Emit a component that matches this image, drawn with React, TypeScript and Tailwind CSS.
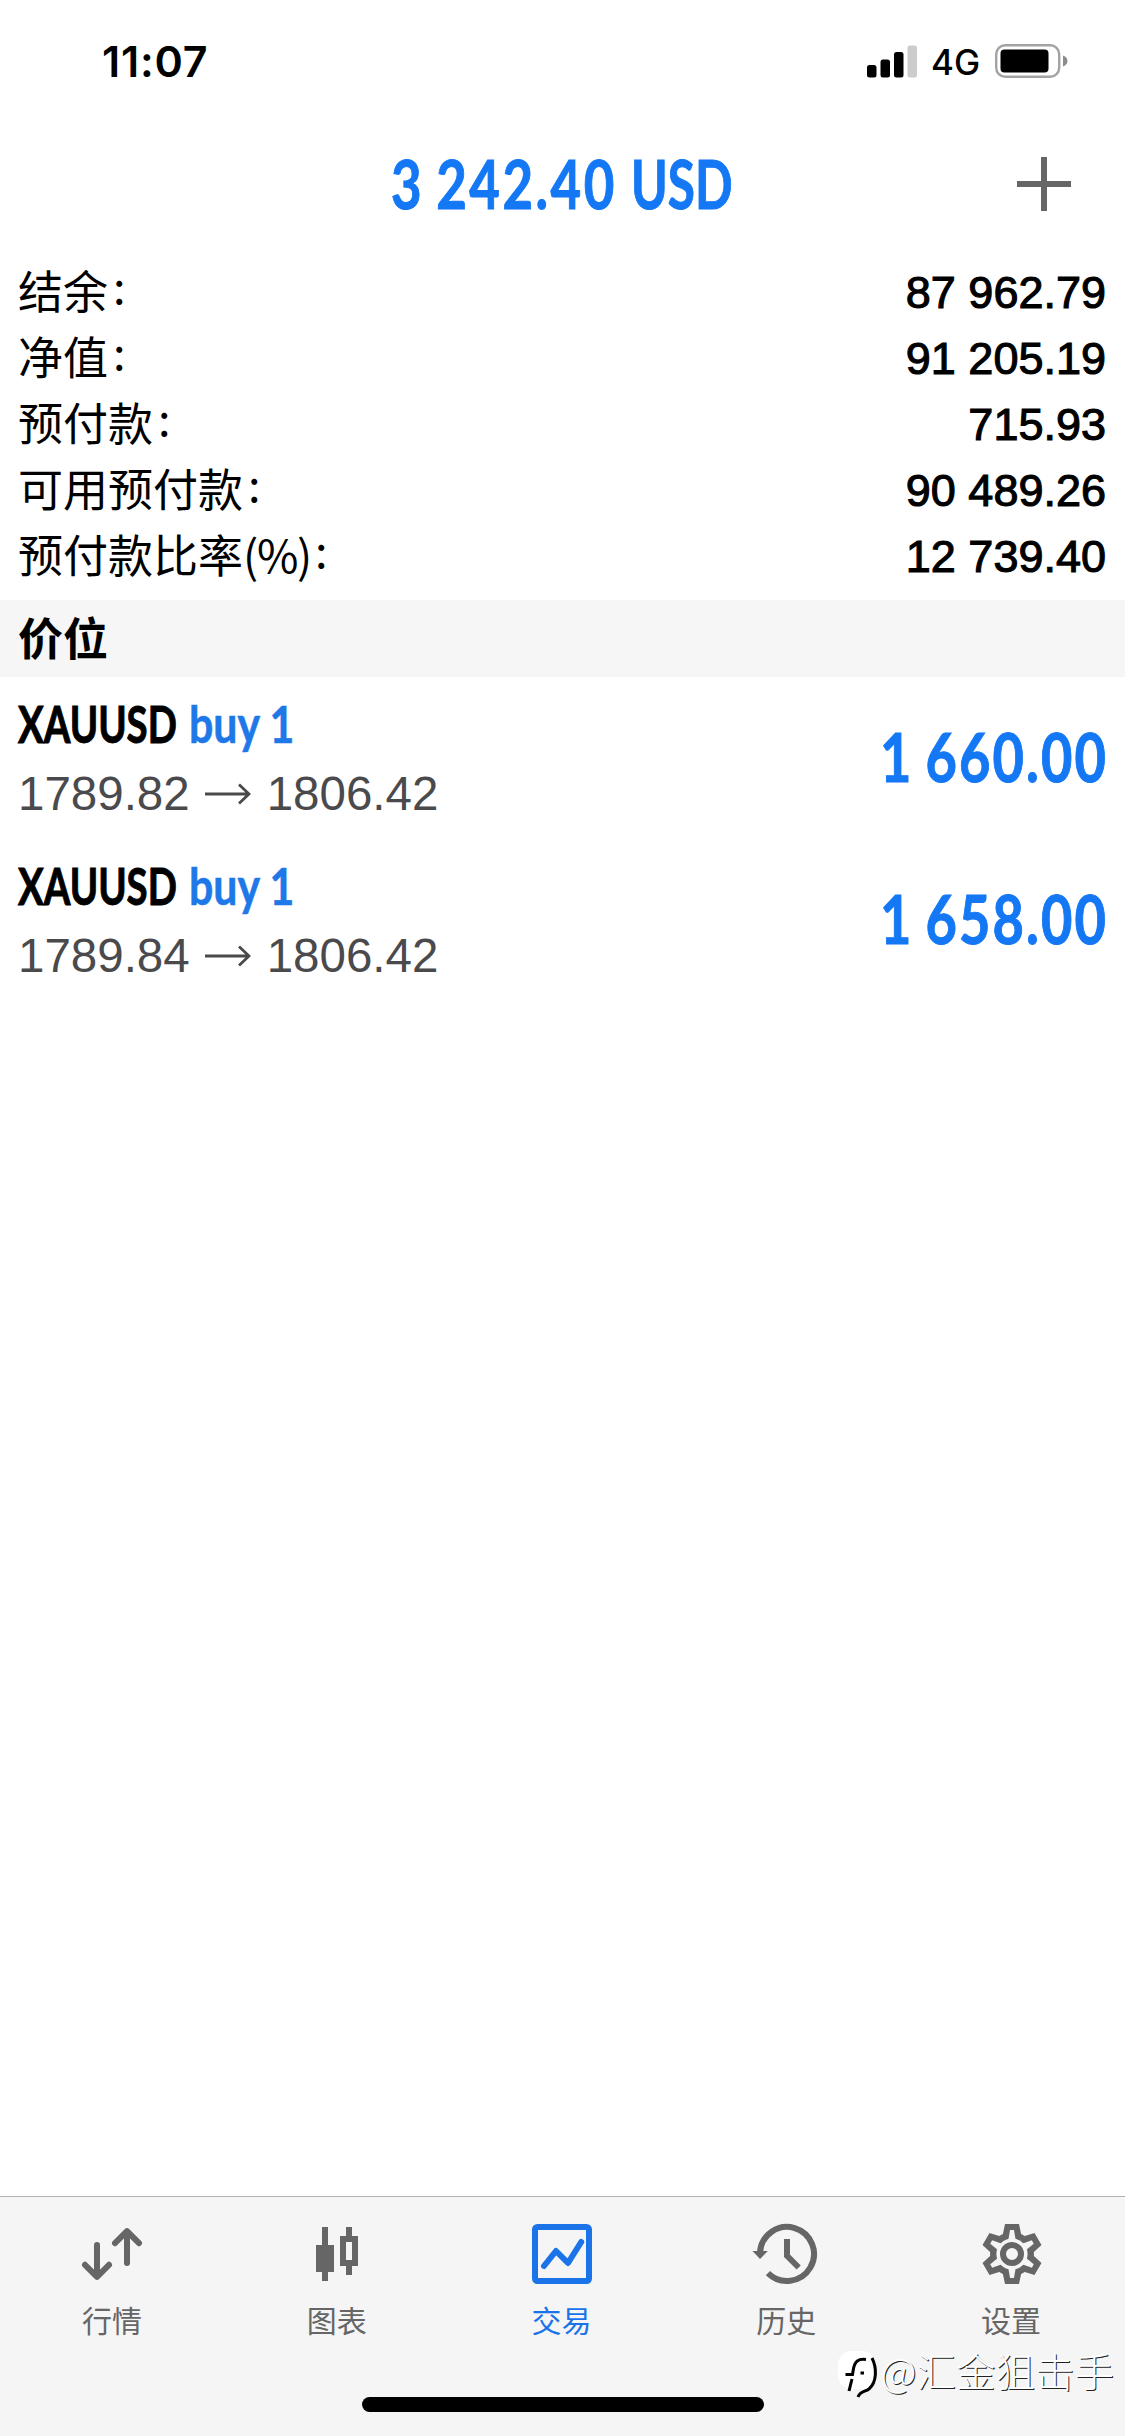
import React from 'react';

const accountRows = [
  { label: '结余', value: '87 962.79' },
  { label: '净值', value: '91 205.19' },
  { label: '预付款', value: '715.93' },
  { label: '可用预付款', value: '90 489.26' },
  { label: '预付款比率', unit: '(%)', value: '12 739.40' },
];

const positions = [
  { id: 1, symbol: 'XAUUSD', side: 'buy 1', open: '1789.82', current: '1806.42', profit: '1 660.00' },
  { id: 2, symbol: 'XAUUSD', side: 'buy 1', open: '1789.84', current: '1806.42', profit: '1 658.00' },
];

const QuotesIcon = () => (
  <g fill="none" stroke="currentColor" strokeWidth="2" strokeLinecap="round" strokeLinejoin="round">
    <path d="M7 9v10.6M3 15.6l4 4 4-4" />
    <path d="M17 15V4.4M13 8.4l4-4 4 4" />
  </g>
);

const ChartIcon = () => (
  <g fill="currentColor">
    <path d="M7 3h2v6h2v9H9v3H7v-3H5V9h2z" />
    <path fillRule="evenodd" d="M15 3h2v3h2v10h-2v3h-2v-3h-2V6h2zM15 8v6h2V8z" />
  </g>
);

const TradeIcon = () => (
  <g fill="none" stroke="currentColor" strokeWidth="2">
    <rect x="3" y="3" width="18" height="18" rx="0.8" />
    <path strokeLinecap="round" strokeLinejoin="round" d="M6 16l4-5 4 4 4.4-7" />
  </g>
);

const HistoryIcon = () => (
  <g fill="none" stroke="currentColor" strokeWidth="2">
    <path d="M3 11.6A9 9 0 1 1 5.64 18.36" />
    <path d="M12 7v5.6l3.9 3.9" />
    <path d="M0.5 11h5.1L3 13.7z" fill="currentColor" stroke="none" />
  </g>
);

const SettingsIcon = () => (
  <g>
    <path
      fill="currentColor"
      d="M9.67 2h4.66l.71 3.33 1.22.7 3.24-1.05 2.33 4.04-2.53 2.28v1.4l2.53 2.28-2.33 4.04-3.24-1.05-1.22.7-.71 3.33H9.67l-.71-3.33-1.22-.7-3.24 1.05-2.33-4.04L4.7 12.7v-1.4L2.17 9.02 4.5 4.98l3.24 1.05 1.22-.7z"
    />
    <g fill="#f5f5f5">
      <circle cx="12" cy="12" r="5.2" />
      {[0, 60, 120, 180, 240, 300].map((angle) => (
        <path key={angle} d="M11.35 4h1.3l.6 3.4h-2.5z" transform={`rotate(${angle} 12 12)`} />
      ))}
    </g>
    <circle cx="12" cy="12" r="3" fill="none" stroke="currentColor" strokeWidth="2" />
  </g>
);

const tabs = [
  { label: '行情', icon: <QuotesIcon />, active: false },
  { label: '图表', icon: <ChartIcon />, active: false },
  { label: '交易', icon: <TradeIcon />, active: true },
  { label: '历史', icon: <HistoryIcon />, active: false },
  { label: '设置', icon: <SettingsIcon />, active: false },
];

const StatusBar = () => (
  <div className="flex h-[122px] items-center justify-between pr-[57px] pl-[102px]">
    <span className="font-['Inter'] text-[43px] leading-none font-semibold tracking-[0.8px]">11:07</span>
    <div className="flex items-center">
      <svg width="51" height="34" viewBox="0 0 51 34">
        <rect x="0" y="21" width="9.5" height="12.5" rx="2.5" />
        <rect x="13.5" y="15.5" width="9.5" height="18" rx="2.5" />
        <rect x="27" y="8" width="9.5" height="25.5" rx="2.5" />
        <rect x="40.5" y="1.5" width="9.5" height="32" rx="2.5" fill="#ccc" />
      </svg>
      <span className="ml-[13px] w-[64px] pt-[3px] font-['Inter'] text-[35px] leading-none font-medium">4G</span>
      <svg width="73" height="34" viewBox="0 0 73 34">
        <rect x="1.2" y="1.2" width="63" height="31.6" rx="9" fill="none" stroke="#a3a3a3" strokeWidth="2.4" />
        <rect x="5.5" y="5.5" width="48" height="23" rx="4" />
        <path d="M68 11.5c6 2 6 9 0 11z" fill="#8c8c8c" />
      </svg>
    </div>
  </div>
);

const Header = () => (
  <div className="grid h-[124px] grid-cols-[1fr_auto_1fr] items-center">
    <span />
    <h1 className="flex w-[343px] font-['Lato'] text-[66px] leading-none font-bold whitespace-nowrap text-[#1478f5] [-webkit-text-stroke:1px_#1478f5]">
      <span className="w-[240px]">
        <span className="inline-block origin-left scale-x-[0.8] tracking-[3.1px] [word-spacing:-4px]">3 242.40</span>
      </span>
      <span className="w-[103px]">
        <span className="inline-block origin-left scale-x-[0.75]">USD</span>
      </span>
    </h1>
    <svg className="mr-[54px] justify-self-end" width="54" height="54" viewBox="0 0 54 54" fill="#666">
      <path d="M0 24h54v6H0z" />
      <path d="M24 0h6v54h-6z" />
    </svg>
  </div>
);

const AccountSummary = () => (
  <dl className="mt-[13px] h-[341px] pr-[19px] pl-[18px]">
    {accountRows.map((row) => (
      <div key={row.label} className="flex h-[66px] items-center justify-between text-[45px] leading-none">
        <dt className="flex pb-[6px] font-['Noto_Sans_CJK_SC',sans-serif]">
          {row.label}
          {row.unit && <span className="-mr-[1px] tracking-[-1.3px]">{row.unit}</span>}
          <span className="ml-[5px] -mt-[5px]">:</span>
        </dt>
        <dd className="font-['Liberation_Sans'] [-webkit-text-stroke:1.1px_#000]">{row.value}</dd>
      </div>
    ))}
  </dl>
);

const PositionRow = ({ item }: { item: (typeof positions)[number] }) => (
  <li className="flex h-[162px] items-center justify-between pl-[18px]">
    <div>
      <div className="flex h-[67px] items-center font-['Lato'] text-[51px] leading-none font-bold whitespace-nowrap">
        <span className="w-[171px]">
          <span className="inline-block origin-left scale-x-[0.752] [-webkit-text-stroke:1px_#000]">{item.symbol}</span>
        </span>
        <span className="inline-block origin-left scale-x-[0.84] text-[#1f78e8] [-webkit-text-stroke:0.6px_#1f78e8]">
          {item.side}
        </span>
      </div>
      <div className="flex h-[69px] items-center pt-[4px] font-['Liberation_Sans'] text-[47.5px] leading-none text-[#4a4a4c]">
        <span>{item.open}</span>
        <svg className="mr-[16px] ml-[15px]" width="46" height="22" viewBox="0 0 46 22" fill="none" stroke="currentColor" strokeWidth="2.8">
          <path d="M0 11h44M34 1.5L44 11 34 20.5" />
        </svg>
        <span>{item.current}</span>
      </div>
    </div>
    <span className="w-[245px] pb-[3px] font-['Lato'] text-[66px] leading-none font-bold whitespace-nowrap text-[#1478f5] [-webkit-text-stroke:1px_#1478f5]">
      <span className="inline-block origin-left scale-x-[0.82] tracking-[2.6px] [word-spacing:-4px]">{item.profit}</span>
    </span>
  </li>
);

const TabBar = () => (
  <nav className="flex h-[240px] flex-col items-center border-t border-[#b2b2b2] bg-[#f5f5f5]">
    <div className="grid w-full grid-cols-5 pt-[21px] pr-px">
      {tabs.map((tab) => (
        <div
          key={tab.label}
          className={`flex flex-col items-center ${tab.active ? 'text-[#1a73e8]' : 'text-[#666]'}`}
        >
          <svg width="72" height="72" viewBox="0 0 24 24">
            {tab.icon}
          </svg>
          <span className="mt-[12px] mr-[1px] font-['Noto_Sans_CJK_SC',sans-serif] text-[30px] leading-[34px]">
            {tab.label}
          </span>
        </div>
      ))}
    </div>
    <div className="mt-[61px] h-[15px] w-[402px] rounded-full bg-black" />
  </nav>
);

const Watermark = () => (
  <div className="absolute top-[2350px] right-[11px] flex items-start text-white">
    <svg width="43" height="50" viewBox="0 0 43 50">
      <rect x="0" y="1" width="38" height="38" rx="14" fill="#fff" />
      <path d="M30 41c8-5 10-23 5-32l-3-3c4 8 5 24-2 31l-9 6z" fill="#fff" />
      <g fill="none" stroke="#000" strokeWidth="3">
        <path d="M34 8c5 10 5 24-3 31-4 3-9 2-11 8" />
        <path d="M28 9.500c-8-1-11 2-12.500 9l-1 6H7.500M14 29l-3 12M22.500 23h3.500" />
      </g>
    </svg>
    <span className="font-['Noto_Sans_CJK_SC',sans-serif] text-[39.5px] leading-[39px] font-light [text-shadow:1px_1px_0_#222]">
      @汇金狙击手
    </span>
  </div>
);

export default function App() {
  return (
    <div className="relative flex h-[2436px] w-[1125px] flex-col overflow-hidden bg-white text-black">
      <StatusBar />
      <Header />
      <AccountSummary />
      <h2 className="flex h-[77px] items-center bg-[#f6f6f6] px-[18px] pb-[4px] font-['Noto_Sans_CJK_SC',sans-serif] text-[45px] leading-none font-bold">
        价位
      </h2>
      <ul className="flex-1">
        {positions.map((item) => (
          <PositionRow key={item.id} item={item} />
        ))}
      </ul>
      <TabBar />
      <Watermark />
    </div>
  );
}
